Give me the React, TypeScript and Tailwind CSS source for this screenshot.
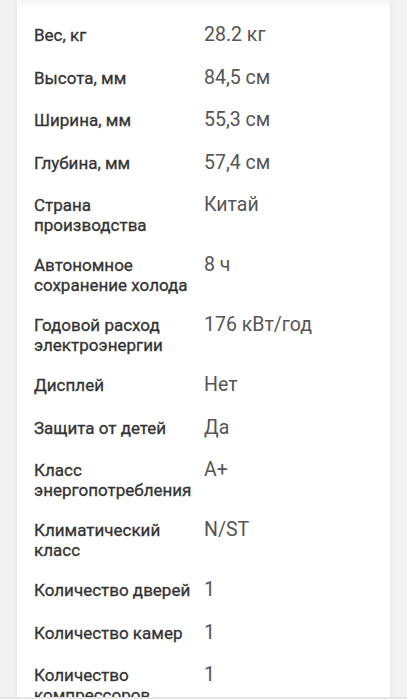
import React from "react";

const rows: [string, string][] = [
  ["Вес, кг", "28.2 кг"],
  ["Высота, мм", "84,5 см"],
  ["Ширина, мм", "55,3 см"],
  ["Глубина, мм", "57,4 см"],
  ["Страна производства", "Китай"],
  ["Автономное сохранение холода", "8 ч"],
  ["Годовой расход электроэнергии", "176 кВт/год"],
  ["Дисплей", "Нет"],
  ["Защита от детей", "Да"],
  ["Класс энергопотребления", "A+"],
  ["Климатический класс", "N/ST"],
  ["Количество дверей", "1"],
  ["Количество камер", "1"],
  ["Количество компрессоров", "1"],
];

export default function App() {
  return (
    <div
      className="min-h-screen bg-[#f2f2f2] px-[17px]"
      style={{ fontFamily: "Roboto, 'Noto Sans', sans-serif" }}
    >
      <div className="bg-white shadow-[0_0_6px_rgba(0,0,0,0.07)]">
        <div className="h-[8px] bg-gradient-to-b from-[#f5f5f5] to-white" />
        <div className="pl-[17px] pr-4 pt-[17px]">
          {rows.map(([k, v]) => (
            <div key={k} className="flex items-start pb-[20px]">
              <div className="w-[160px] mr-[10px] shrink-0 text-[17px] leading-[20px] font-normal text-[#333333] [-webkit-text-stroke:0.3px_#333333]">
                {k}
              </div>
              <div className="relative -top-[1px] text-[19.5px] leading-[22.5px] text-[#555555]">{v}</div>
            </div>
          ))}
        </div>
      </div>
      <div className="fixed left-0 right-0 bottom-0 h-[2px] bg-[#e6e6e6]" />
    </div>
  );
}
